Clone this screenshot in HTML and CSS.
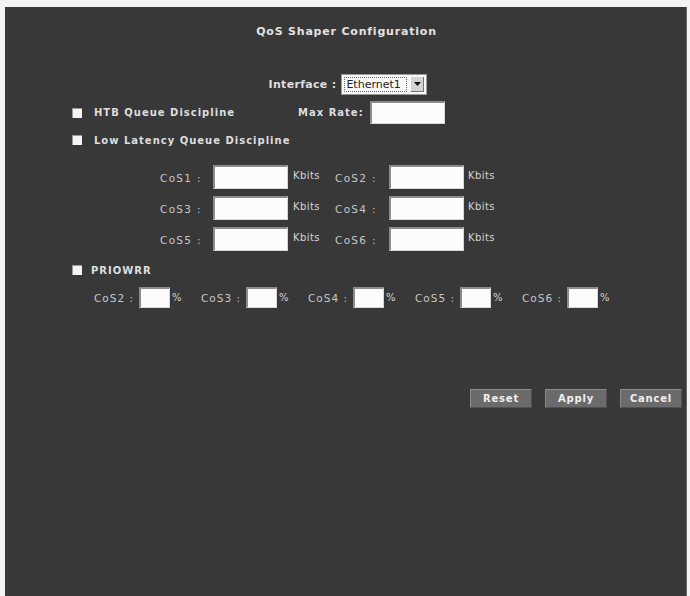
FILE: index.html
```html
<!DOCTYPE html>
<html>
<head>
<meta charset="utf-8">
<link rel="stylesheet" href="styles.css">
</head>
<body>
<div class="panel">
  <h1 class="title">QoS Shaper Configuration</h1>

  <div class="iface-row">
    <span class="blabel">Interface :</span>
    <div class="select"><span class="select-text">Ethernet1</span><span class="select-btn"><svg width="7" height="4" viewBox="0 0 7 4"><path d="M0 0h7L3.5 4z" fill="#111"/></svg></span></div>
  </div>

  <div class="check-row htb">
    <span class="cb"></span>
    <span class="blabel chk-label htb-label">HTB Queue Discipline</span>
    <span class="blabel maxrate">Max Rate:</span>
    <span class="field w75 h23"></span>
  </div>

  <div class="check-row llq">
    <span class="cb"></span>
    <span class="blabel chk-label">Low Latency Queue Discipline</span>
  </div>

  <div class="cos-grid">
    <span class="clabel">CoS1 :</span><span class="field w75 h24"></span><span class="unit">Kbits</span>
    <span class="clabel2">CoS2 :</span><span class="field w75 h24"></span><span class="unit2">Kbits</span>
    <span class="clabel">CoS3 :</span><span class="field w75 h24"></span><span class="unit">Kbits</span>
    <span class="clabel2">CoS4 :</span><span class="field w75 h24"></span><span class="unit2">Kbits</span>
    <span class="clabel">CoS5 :</span><span class="field w75 h24"></span><span class="unit">Kbits</span>
    <span class="clabel2">CoS6 :</span><span class="field w75 h24"></span><span class="unit2">Kbits</span>
  </div>

  <div class="check-row prio">
    <span class="cb"></span>
    <span class="blabel prio-label">PRIOWRR</span>
  </div>

  <div class="pct-row">
    <div class="pct"><span class="plabel">CoS2 :</span><span class="field w31 h21"></span><span class="punit">%</span></div>
    <div class="pct"><span class="plabel">CoS3 :</span><span class="field w31 h21"></span><span class="punit">%</span></div>
    <div class="pct"><span class="plabel">CoS4 :</span><span class="field w31 h21"></span><span class="punit">%</span></div>
    <div class="pct"><span class="plabel">CoS5 :</span><span class="field w31 h21"></span><span class="punit">%</span></div>
    <div class="pct"><span class="plabel">CoS6 :</span><span class="field w31 h21"></span><span class="punit">%</span></div>
  </div>

  <div class="buttons">
    <button class="btn">Reset</button>
    <button class="btn">Apply</button>
    <button class="btn">Cancel</button>
  </div>
</div>
</body>
</html>
```

FILE: styles.css
```css
html, body {
  margin: 0;
  padding: 0;
  background: #f4f4f4;
  height: 596px;
  overflow: hidden;
}
body {
  font-family: "DejaVu Sans", Verdana, sans-serif;
}
.panel {
  margin: 7px 3px 0 5px;
  width: 682px;
  height: 589px;
  background: #383838;
  box-sizing: border-box;
  border-right: 1px solid #6a6a6a;
}
.title {
  margin: 0;
  padding-top: 18px;
  height: 14px;
  line-height: 14px;
  font-size: 11px;
  font-weight: bold;
  text-align: center;
  color: #e2e2e2;
  letter-spacing: 0.8px;
  padding-left: 2px;
}
.blabel {
  font-size: 10px;
  font-weight: bold;
  color: #dedede;
  letter-spacing: 1px;
  white-space: nowrap;
}
.iface-row {
  margin-top: 35px;
  height: 21px;
  display: flex;
  align-items: center;
  justify-content: center;
  gap: 5px;
  padding-left: 5px;
}
.iface-row .blabel {
  font-size: 11px;
  letter-spacing: 0.3px;
}
.select {
  width: 86px;
  height: 21px;
  box-sizing: border-box;
  background: #f8f8f8;
  border: 1px solid #9a9a9a;
  display: flex;
  align-items: center;
  padding: 2px;
}
.select-text {
  flex: 1;
  font-family: "DejaVu Sans", sans-serif;
  font-size: 11px;
  color: #222;
  border: 1px dotted #666;
  line-height: 13px;
  padding-left: 1px;
  margin-right: 3px;
}
.select-btn {
  width: 14px;
  height: 15px;
  background: #d4d4d4;
  border-left: 1px solid #fff;
  border-right: 1px solid #777;
  border-bottom: 1px solid #777;
  box-sizing: border-box;
  display: flex;
  align-items: center;
  justify-content: center;
}
.check-row {
  display: flex;
  align-items: center;
  padding-left: 67px;
}
.htb {
  margin-top: 6px;
  height: 23px;
}
.llq {
  margin-top: 9px;
  height: 14px;
}
.prio {
  margin-top: 12px;
  height: 14px;
}
.cb {
  width: 9px;
  height: 9px;
  background: #f4f4f4;
  border-top: 1px solid #999;
  border-left: 1px solid #999;
}
.chk-label {
  margin-left: 12px;
}
.htb-label {
  width: 204px;
}
.prio-label {
  margin-left: 9px;
}
.maxrate {
  width: 72px;
}
.field {
  display: block;
  box-sizing: border-box;
  background: #fcfcfc;
  border-top: 2px solid #8c8c8c;
  border-left: 2px solid #8c8c8c;
  border-right: 1px solid #d8d8d8;
  border-bottom: 1px solid #d8d8d8;
}
.w75 { width: 75px; }
.w31 { width: 31px; }
.h23 { height: 23px; }
.h24 { height: 24px; }
.h21 { height: 21px; }
.cos-grid {
  margin-top: 18px;
  margin-left: 150px;
  display: grid;
  grid-template-columns: 58px 75px 45px 56px 75px auto;
  grid-auto-rows: 24px;
  row-gap: 7px;
  align-items: center;
}
.clabel, .clabel2, .plabel {
  font-size: 10.5px;
  color: #c6c6c6;
  letter-spacing: 1.3px;
  white-space: nowrap;
}
.clabel {
  padding-left: 5px;
  position: relative;
  top: 1px;
}
.clabel2 {
  padding-left: 2px;
  position: relative;
  top: 1px;
}
.unit, .unit2 {
  font-size: 10px;
  color: #d4d4d4;
  position: relative;
  top: -2px;
  letter-spacing: 0.4px;
}
.unit { padding-left: 5px; }
.unit2 { padding-left: 4px; }
.pct-row {
  margin-top: 10px;
  padding-left: 89px;
  display: grid;
  grid-template-columns: repeat(5, 107px);
  height: 21px;
}
.pct {
  display: flex;
  align-items: center;
}
.plabel {
  width: 45px;
  letter-spacing: 1px;
}
.punit {
  font-size: 10px;
  color: #d4d4d4;
  margin-left: 2px;
}
.buttons {
  margin-top: 81px;
  display: flex;
  justify-content: flex-end;
  gap: 13px;
  padding-right: 4px;
}
.btn {
  width: 62px;
  height: 19px;
  padding: 0;
  background: #6b6b6b;
  border: 1px solid #8a8a8a;
  border-bottom-color: #505050;
  border-right-color: #505050;
  color: #f0f0f0;
  font-family: "DejaVu Sans", sans-serif;
  font-weight: bold;
  font-size: 10px;
  letter-spacing: 0.8px;
}
```
